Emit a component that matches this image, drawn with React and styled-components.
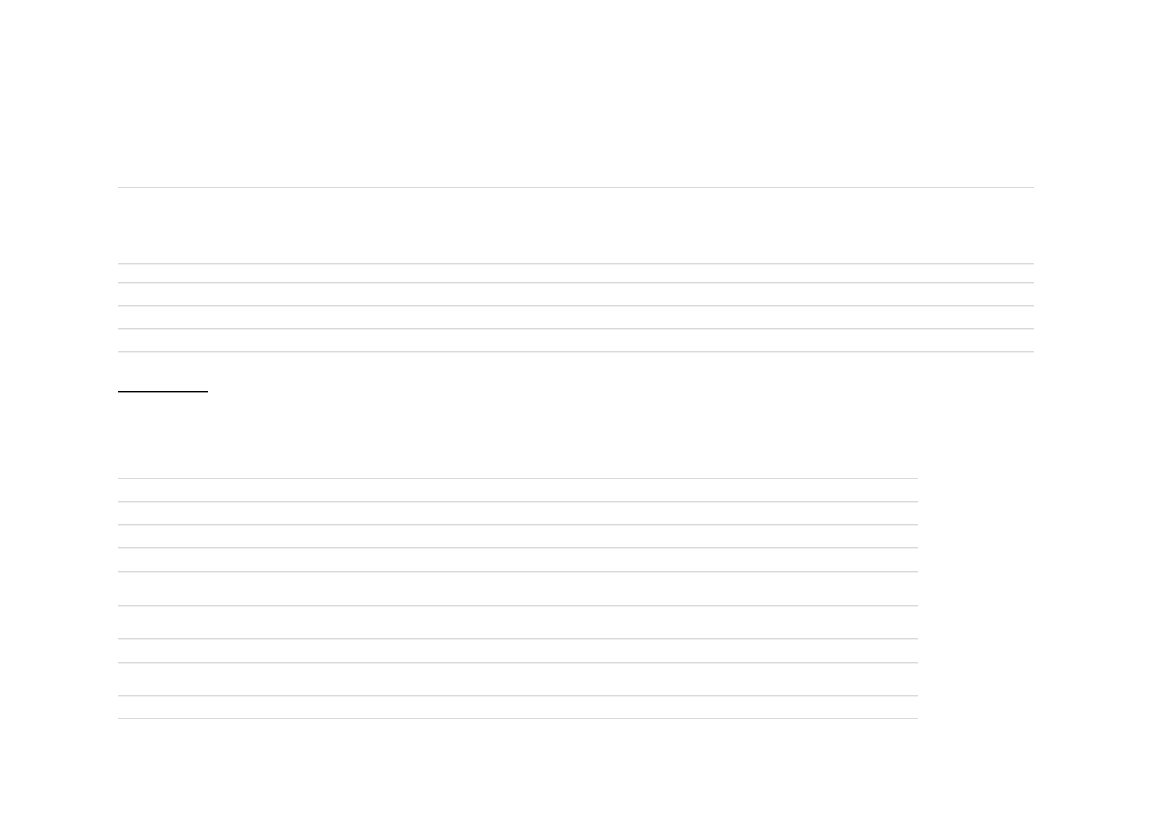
import React from "react";
import styled, { createGlobalStyle } from "styled-components";

const Global = createGlobalStyle`
  html, body { margin: 0; padding: 0; background: #ffffff; }
  body { font-family: "Liberation Sans", Arial, sans-serif; color: #ffffff; }
`;

const Page = styled.main`
  padding: 187px 0 0 118px;
  display: flex;
  flex-direction: column;
  align-items: flex-start;
`;

const Table = styled.div`
  width: ${(p) => p.$width}px;
  display: flex;
  flex-direction: column;
`;

const Row = styled.div`
  box-sizing: border-box;
  display: grid;
  grid-template-columns: ${(p) => p.$cols};
  height: ${(p) => p.$h}px;
  border-bottom: 1px solid #d9d9d9;
  box-shadow: 0 1px 0 #efefef;
  ${(p) => (p.$first ? "border-top: 1px solid #d9d9d9;" : "")}
`;

const Cell = styled.div`
  min-width: 0;
`;

const TabHeading = styled.div`
  box-sizing: border-box;
  width: 90px;
  height: 40px;
  border-bottom: 1px solid #000000;
  box-shadow: 0 1px 0 #9a9a9a;
`;

const Spacer = styled.div`
  height: ${(p) => p.$h}px;
`;

const topCols = "39px 287px 256px 52px 110px 172px";
const topRows = [77, 19, 23, 23, 23];

const bottomCols = "56px 55px 170px 62px 99px 60px 120px 66px 112px";
const bottomRows = [24, 23, 23, 24, 34, 33, 24, 33, 23];

function DataTable({ width, cols, rows }) {
  const n = cols.split(" ").length;
  return (
    <Table $width={width} role="table">
      {rows.map((h, i) => (
        <Row key={i} $h={h} $cols={cols} $first={i === 0} role="row">
          {Array.from({ length: n }).map((_, j) => (
            <Cell key={j} role="cell" />
          ))}
        </Row>
      ))}
    </Table>
  );
}

export default function App() {
  return (
    <>
      <Global />
      <Page>
        <DataTable width={916} cols={topCols} rows={topRows} />
        <TabHeading />
        <Spacer $h={86} />
        <DataTable width={800} cols={bottomCols} rows={bottomRows} />
      </Page>
    </>
  );
}
